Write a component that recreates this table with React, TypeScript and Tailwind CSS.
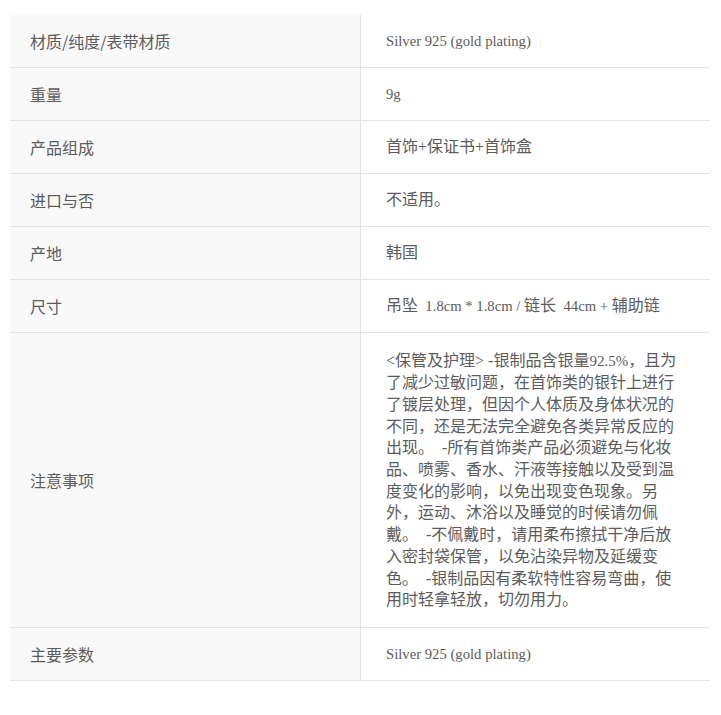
import React from "react";

const rows: { k: string; v: React.ReactNode; long?: boolean }[] = [
  { k: "材质/纯度/表带材质", v: <span className="text-[14.7px]">Silver 925 (gold plating)</span> },
  { k: "重量", v: <span className="text-[14.7px]">9g</span> },
  { k: "产品组成", v: "首饰+保证书+首饰盒" },
  { k: "进口与否", v: "不适用。" },
  { k: "产地", v: "韩国" },
  {
    k: "尺寸",
    v: (
      <span>
        吊坠<span className="text-[14.7px] whitespace-pre">  1.8cm * 1.8cm / </span>链长
        <span className="text-[14.7px] whitespace-pre">  44cm + </span>辅助链
      </span>
    ),
  },
  {
    k: "注意事项",
    long: true,
    v: (
      <div className="leading-[21.7px]">
        <div>&lt;保管及护理&gt; -银制品含银量<span className="text-[15px]">92.5%</span>，且为</div>
        <div>了减少过敏问题，在首饰类的银针上进行</div>
        <div>了镀层处理，但因个人体质及身体状况的</div>
        <div>不同，还是无法完全避免各类异常反应的</div>
        <div className="whitespace-pre">出现。  -所有首饰类产品必须避免与化妆</div>
        <div>品、喷雾、香水、汗液等接触以及受到温</div>
        <div>度变化的影响，以免出现变色现象。另</div>
        <div>外，运动、沐浴以及睡觉的时候请勿佩</div>
        <div className="whitespace-pre">戴。  -不佩戴时，请用柔布擦拭干净后放</div>
        <div>入密封袋保管，以免沾染异物及延缓变</div>
        <div className="whitespace-pre">色。  -银制品因有柔软特性容易弯曲，使</div>
        <div>用时轻拿轻放，切勿用力。</div>
      </div>
    ),
  },
  { k: "主要参数", v: <span className="text-[14.7px]">Silver 925 (gold plating)</span> },
];

export default function App() {
  return (
    <div
      className="w-[721px] h-[715px] bg-white pt-[15px] pl-[10px] text-[#5c5c5c] text-[16px]"
      style={{ fontFamily: '"Liberation Serif", "Noto Sans CJK SC", serif' }}
    >
      <div className="w-[700px] flex flex-col">
        {rows.map((r, i) => (
          <div key={i} className="flex border-b border-[#e3e3e3]">
            <div
              className="w-[351px] shrink-0 bg-[#f9f9f9] border-r border-[#e3e3e3] pl-[20px] flex items-center"
              style={{ fontFamily: '"Noto Sans CJK SC", sans-serif' }}
            >
              {r.k}
            </div>
            <div
              className={
                r.long
                  ? "flex-1 bg-white pl-[25px] py-[16.5px] flex items-center"
                  : "flex-1 bg-white pl-[25px] h-[52px] flex items-center"
              }
            >
              {r.v}
            </div>
          </div>
        ))}
      </div>
    </div>
  );
}
